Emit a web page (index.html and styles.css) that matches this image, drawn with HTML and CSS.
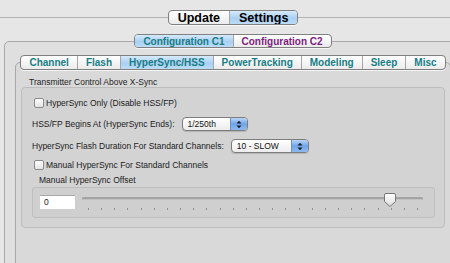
FILE: index.html
```html
<!DOCTYPE html>
<html lang="en">
<head>
    <meta charset="UTF-8">
    <title>Settings - HyperSync/HSS</title>
    <link rel="stylesheet" href="styles.css">
</head>
<body>
    <div class="window">
        <div class="mode-bar">
            <span class="rule"></span>
            <div class="seg seg-mode">
                <span class="seg-item">Update</span>
                <span class="seg-item on">Settings</span>
            </div>
            <span class="rule"></span>
        </div>

        <div class="seg-row">
            <div class="seg seg-config">
                <span class="seg-item on c1">Configuration C1</span>
                <span class="seg-item c2">Configuration C2</span>
            </div>
        </div>

        <div class="config-box">
            <div class="seg-row tabs-row">
                <div class="seg seg-tabs">
                    <span class="seg-item">Channel</span>
                    <span class="seg-item">Flash</span>
                    <span class="seg-item on">HyperSync/HSS</span>
                    <span class="seg-item">PowerTracking</span>
                    <span class="seg-item">Modeling</span>
                    <span class="seg-item">Sleep</span>
                    <span class="seg-item">Misc</span>
                </div>
            </div>

            <div class="tab-box">
                <div class="group-title">Transmitter Control Above X-Sync</div>
                <div class="group">
                    <label class="check-row">
                        <span class="check"></span>
                        <span>HyperSync Only (Disable HSS/FP)</span>
                    </label>

                    <div class="field-row">
                        <span>HSS/FP Begins At (HyperSync Ends):</span>
                        <div class="popup popup-begins">
                            <span class="popup-text">1/250th</span>
                            <span class="popup-arrows">
                                <svg width="6" height="9" viewBox="0 0 6 9"><path d="M0.5 3.5L3 0.8L5.5 3.5Z M0.5 5.5L3 8.2L5.5 5.5Z" fill="#1c1c1c"/></svg>
                            </span>
                        </div>
                    </div>

                    <div class="field-row row-duration">
                        <span>HyperSync Flash Duration For Standard Channels:</span>
                        <div class="popup popup-duration">
                            <span class="popup-text">10 - SLOW</span>
                            <span class="popup-arrows">
                                <svg width="6" height="9" viewBox="0 0 6 9"><path d="M0.5 3.5L3 0.8L5.5 3.5Z M0.5 5.5L3 8.2L5.5 5.5Z" fill="#1c1c1c"/></svg>
                            </span>
                        </div>
                    </div>

                    <label class="check-row row-manual">
                        <span class="check"></span>
                        <span>Manual HyperSync For Standard Channels</span>
                    </label>

                    <div class="offset-title">Manual HyperSync Offset</div>
                    <div class="slider-box">
                        <span class="num-field">0</span>
                        <svg class="slider" width="346" height="22" viewBox="0 0 346 22">
                            <defs>
                                <linearGradient id="knob" x1="0" y1="0" x2="0" y2="1">
                                    <stop offset="0" stop-color="#ffffff"/>
                                    <stop offset="1" stop-color="#dcdcdc"/>
                                </linearGradient>
                            </defs>
                            <rect x="2" y="6" width="341" height="3" rx="1.5" fill="#a3a3a3"/>
                            <rect x="3" y="8" width="339" height="1" fill="#c2c2c2"/>
                            <path d="M8.5 17v2M21.5 17v2M34.5 17v2M47.5 17v2M61.5 17v2M74.5 17v2M87.5 17v2M100.5 17v2M113.5 17v2M126.5 17v2M140.5 17v2M153.5 17v2M166.5 17v2M179.5 17v2M192.5 17v2M205.5 17v2M219.5 17v2M232.5 17v2M245.5 17v2M258.5 17v2M271.5 17v2M284.5 17v2M298.5 17v2M311.5 17v2M324.5 17v2M337.5 17v2" stroke="#8f8f8f" stroke-width="1"/>
                            <path d="M304.5 4Q304.5 2.5 306 2.5H314Q315.5 2.5 315.5 4V10.5L310 15.5L304.5 10.5Z" fill="url(#knob)" stroke="#767676" stroke-width="1"/>
                        </svg>
                    </div>
                </div>
            </div>
        </div>
    </div>
</body>
</html>
```

FILE: styles.css
```css
body { margin: 0; background-color: #e6e6e6; font-family: "Liberation Sans", Arial, sans-serif; color: #1b1b1b; overflow: hidden; }
.window { width: 466px; height: 263px; box-sizing: border-box; padding-top: 10px; overflow: hidden; }

/* segmented controls */
.mode-bar { display: flex; align-items: center; height: 15px; }
.rule { flex: 1; border-top: 1px solid #b3b3b3; }
.seg { display: flex; border: 1px solid #808080; border-radius: 4px; overflow: hidden; background: linear-gradient(#ffffff, #ebebeb); box-shadow: 0 1px 0 rgba(255,255,255,0.7); }
.seg-item { display: flex; align-items: center; padding: 0 8px; font-weight: bold; border-left: 1px solid #a6a6a6; white-space: nowrap; }
.seg-item:first-child { border-left: none; }
.seg-item.on { background: linear-gradient(#d6eafb, #a9d0f3 55%, #bcdcf7); }
.seg-mode { height: 13px; }
.seg-mode .seg-item { font-size: 12.5px; padding: 0 9px; color: #000; }
.seg-row { display: flex; justify-content: center; position: relative; z-index: 1; }
.seg-row:not(.tabs-row) { margin-top: 9px; }
.seg-config { height: 12px; }
.seg-config .seg-item { font-size: 10px; }
.c1 { color: #177d86; }
.c2 { color: #7d1d80; }
.seg-tabs { height: 13px; }
.seg-tabs .seg-item { font-size: 10px; color: #177d86; }

/* boxes */
.config-box { margin: -7px 4px 0; border: 1px solid #a9a9a9; border-radius: 5px; background-color: #dfdfdf; padding: 13px 0 80px; }
.tab-box { margin: -8px 10px 0; border: 1px solid #a9a9a9; border-radius: 5px; background-color: #d9d9d9; padding: 14px 0 80px; }
.group-title { font-size: 8.5px; line-height: 10px; padding-left: 13px; color: #222; }
.group { margin: 0 5px; border: 1px solid #bdbdbd; border-radius: 4px; background-color: #d3d3d3; padding: 10px 9px 9px 10px; }

/* rows */
.check-row { display: flex; align-items: center; gap: 2px; margin-left: 2px; height: 10px; font-size: 8.5px; }
.check { width: 8px; height: 8px; border: 1px solid #8a8a8a; border-radius: 2px; background: linear-gradient(#ffffff, #e3e3e3); }
.row-manual { margin-top: 7px; }
.field-row { display: flex; align-items: center; gap: 7px; margin-top: 9px; font-size: 8.5px; }
.row-duration { margin-top: 8px; }
.popup { display: flex; height: 12px; border: 1px solid #7d7d7d; border-radius: 4px; overflow: hidden; background: linear-gradient(#ffffff, #ececec); box-shadow: 0 1px 1px rgba(0,0,0,0.15); }
.popup-begins { width: 64px; }
.popup-duration { width: 76px; }
.popup-text { flex: 1; display: flex; align-items: center; padding-left: 5px; font-size: 8.5px; color: #111; }
.popup-arrows { width: 16px; display: flex; align-items: center; justify-content: center; border-left: 1px solid #7090c0; background: linear-gradient(#b7d6f8, #6fa4ea 50%, #8fbaf0); }

/* slider */
.offset-title { margin-top: 5px; padding-left: 7px; font-size: 8.5px; line-height: 10px; }
.slider-box { display: flex; align-items: flex-start; height: 31px; box-sizing: border-box; margin-top: 2px; border: 1px solid #bebebe; border-radius: 3px; background-color: #cfcfcf; padding: 3px 8px 0 7px; }
.num-field { width: 39px; height: 14px; box-sizing: border-box; margin-top: 4px; padding-left: 4px; background-color: #fff; border-top: 1px solid #a8a8a8; font-size: 8.5px; line-height: 13px; color: #222; }
.slider { flex: none; margin-left: 5px; }
```
